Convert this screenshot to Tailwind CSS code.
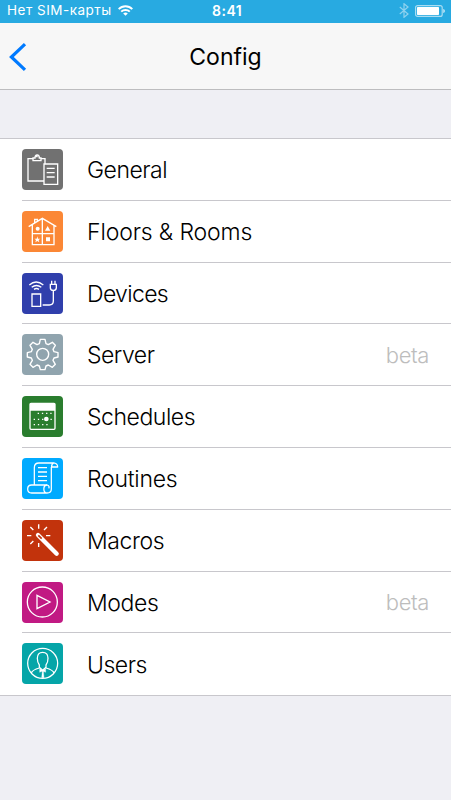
<!DOCTYPE html>
<html lang="en">
<head>
<meta charset="utf-8">
<title>Config</title>
<script src="https://cdn.jsdelivr.net/npm/@tailwindcss/browser@4"></script>
</head>
<body class="w-[451px] h-[800px] overflow-hidden bg-[#efeff4] font-['Inter','Liberation_Sans',sans-serif] text-black">
<header>
  <div class="relative h-[23px] pb-[2px] bg-[#28aae1] text-white flex items-center justify-between pl-[7px] pr-[6px]">
    <div class="flex items-center gap-[6px]">
      <span class="text-[13.5px] leading-[21px] tracking-[0.5px] whitespace-nowrap">Нет SIM-карты</span>
      <svg class="w-[15px] h-[11px]" viewBox="0 0 15 11" fill="none" stroke="#fff" stroke-width="1.9"><path d="M.7 4.1a9.6 9.6 0 0 1 13.6 0M3.2 6.7a6.1 6.1 0 0 1 8.6 0"/><path d="M7.5 10.8 5.2 8.5a3.3 3.3 0 0 1 4.6 0z" fill="#fff" stroke="none"/></svg>
    </div>
    <span class="absolute left-[212px] top-0 text-[14px] leading-[22px] font-semibold tracking-[0.5px]">8:41</span>
    <div class="flex items-center gap-[6px]">
      <svg class="w-[10px] h-[15px]" viewBox="0 0 10 15" fill="none" stroke="#8fd2ef" stroke-width="1.2"><path d="M.8 4 9 11 5 14.3V.7L9 4 .8 11"/></svg>
      <svg class="w-[30px] h-[12px]" viewBox="0 0 30 12"><rect x=".6" y=".6" width="26.6" height="10.8" rx="2" fill="none" stroke="#a9ddf3" stroke-width="1.2"/><rect x="2" y="2" width="22" height="8" rx=".7" fill="#fff"/><path d="M28.3 4c2 .6 2 3.4 0 4z" fill="#d4eef9"/></svg>
    </div>
  </div>
  <div class="relative h-[67px] bg-[#f7f7f7] border-b border-[#bdbdbf] flex items-center justify-center">
    <svg class="absolute left-[9px] top-[20px] w-[18px] h-[28px]" viewBox="0 0 18 28" fill="none" stroke="#007aff" stroke-width="3.2"><path d="M16 1.2 2.4 14 16 26.8"/></svg>
    <h1 class="text-[23px] leading-[28px] tracking-[0px] pt-[2px] font-normal">Config</h1>
  </div>
</header>
<main class="mt-[48px] border-y border-[#c8c7cc] bg-white">
  <ul>
    <li class="h-[61.8px] pl-[22px] flex"><svg class="w-[41px] h-[41px] mt-[10px] mr-[24px] rounded-[4px] bg-[#717171]" viewBox="30 25 121 123" fill="none" stroke="#fff" stroke-width="4"><path d="M94 121H47V54h16M84 54h14v15M62 60v-8h6c0-12 13-12 13 0h5v8zM71 48h5M95 70h41v61H95zM103 83h24M103 96h24M103 109h24"/></svg><div class="flex-1 flex items-center"><span class="text-[23px] font-light tracking-[-0.5px] whitespace-nowrap">General</span></div></li>
    <li class="h-[61.8px] pl-[22px] flex"><svg class="w-[41px] h-[41px] mt-[10px] mr-[24px] rounded-[4px] bg-[#fb8735]" viewBox="30 25 121 123" fill="none" stroke="#fff" stroke-width="4"><path d="M49 72 90 47l42 25M60 67v59h65V67M90 49v77M60 93h65M67 60V50h8v6"/><g fill="#fff" stroke="none"><circle cx="76" cy="78" r="6"/><path d="m106 70 8 14H98zM101 104h12v12h-12zM75 101l2 7h7l-5 4 2 7-6-4-6 4 2-7-5-4h7z"/></g></svg><div class="relative flex-1 flex items-center before:absolute before:h-px before:bg-[#c8c7cc] before:-top-px before:-left-[65px] before:right-0"><span class="text-[23px] font-light tracking-[-0.13px] whitespace-nowrap pt-px">Floors &amp; Rooms</span></div></li>
    <li class="h-[61.8px] pl-[22px] flex"><svg class="w-[41px] h-[41px] mt-[10px] mr-[24px] rounded-[4px] bg-[#303fac]" viewBox="30 25 121 123" fill="none" stroke="#fff" stroke-width="4"><path d="M59 88h26v37H59zM91 121h20q12 0 12-12V77M114 59h18v10q0 8-9 8t-9-8zM118 59V48M128 59V48M51 61q20-18 42 0M58 68q14-11 29 0M65 74q7-5 15 0"/></svg><div class="relative flex-1 flex items-center before:absolute before:h-px before:bg-[#c8c7cc] before:-top-px before:-left-[65px] before:right-0"><span class="text-[23px] font-light tracking-[-0.65px] whitespace-nowrap pt-px">Devices</span></div></li>
    <li class="h-[61.8px] pl-[22px] flex"><svg class="w-[41px] h-[41px] mt-[10px] mr-[24px] rounded-[4px] bg-[#90a4ae]" viewBox="30 25 121 123" fill="none" stroke="#fff" stroke-width="4.2" stroke-linejoin="round"><circle cx="91" cy="86" r="18"/><path d="M84 41h14l3 13 7 3 12-7 9 9-7 12 3 7 12 3v13l-12 3-3 7 7 12-9 9-12-7-7 3-3 11H84l-3-11-7-3-12 7-9-9 7-12-3-7-12-3V81l12-3 3-7-7-12 9-9 12 7 7-3z"/></svg><div class="relative flex-1 flex items-center justify-between pr-[22px] before:absolute before:h-px before:bg-[#c8c7cc] before:-top-px before:-left-[65px] before:right-0"><span class="text-[23px] font-light tracking-[-0.5px] whitespace-nowrap">Server</span><span class="text-[22px] font-light text-[#bdbdbd] tracking-[-0.4px]">beta</span></div></li>
    <li class="h-[61.8px] pl-[22px] flex"><svg class="w-[41px] h-[41px] mt-[10px] mr-[24px] rounded-[4px] bg-[#2a7d2e]" viewBox="30 25 121 123" fill="none" stroke="#fff" stroke-width="4"><rect x="53" y="47" width="75" height="78" rx="3"/><path d="M53 47h75v22H53z" fill="#fff" stroke="none"/><g stroke-dasharray="4 8.6"><path d="M76 77h43M64 95h55M64 111h43"/></g><circle cx="102" cy="94" r="7" fill="#fff" stroke="none"/></svg><div class="relative flex-1 flex items-center before:absolute before:h-px before:bg-[#c8c7cc] before:-top-px before:-left-[65px] before:right-0"><span class="text-[23px] font-light tracking-[-0.45px] whitespace-nowrap">Schedules</span></div></li>
    <li class="h-[61.8px] pl-[22px] flex"><svg class="w-[41px] h-[41px] mt-[10px] mr-[24px] rounded-[4px] bg-[#00aaff]" viewBox="30 25 121 123" fill="none" stroke="#fff" stroke-width="3.8" stroke-linejoin="round"><path d="M66 105V54q0-14 14-14h46q10 2 10 12h-18q-1-9 6-12M117 52v66q0 12-13 12H58c-16 0-16-24 0-24h46M105 106c-14 0-14 24 0 24M105 106q8 4 4 10M77 54h27M77 67h27M77 80h27M77 93h27"/></svg><div class="relative flex-1 flex items-center before:absolute before:h-px before:bg-[#c8c7cc] before:-top-px before:-left-[65px] before:right-0"><span class="text-[23px] font-light tracking-[-0.25px] whitespace-nowrap">Routines</span></div></li>
    <li class="h-[61.8px] pl-[22px] flex"><svg class="w-[41px] h-[41px] mt-[10px] mr-[24px] rounded-[4px] bg-[#c2330c]" viewBox="30 25 121 123" fill="none" stroke="#fff" stroke-width="4.2"><path d="m77 70 56 56" stroke-width="13" stroke-linecap="round"/><path d="m78 71 10 10" stroke="#c2330c" stroke-width="5"/><path d="M79 38v13M79 94v12M44 72h13M101 72h13M54 46l9 9M104 46l-9 9M54 97l9-9"/></svg><div class="relative flex-1 flex items-center before:absolute before:h-px before:bg-[#c8c7cc] before:-top-px before:-left-[65px] before:right-0"><span class="text-[23px] font-light tracking-[-0.4px] whitespace-nowrap pt-px">Macros</span></div></li>
    <li class="h-[61.8px] pl-[22px] flex"><svg class="w-[41px] h-[41px] mt-[10px] mr-[24px] rounded-[4px] bg-[#c11a83]" viewBox="30 25 121 123" fill="none" stroke="#fff" stroke-width="4"><circle cx="90" cy="85" r="45"/><path d="m74 65 39 20-39 20z"/></svg><div class="relative flex-1 flex items-center justify-between pr-[22px] before:absolute before:h-px before:bg-[#c8c7cc] before:-top-px before:-left-[65px] before:right-0"><span class="text-[23px] font-light tracking-[-0.4px] whitespace-nowrap pt-px">Modes</span><span class="text-[22px] font-light text-[#bdbdbd] tracking-[-0.4px] pt-px">beta</span></div></li>
    <li class="h-[61.8px] pl-[22px] flex"><svg class="w-[41px] h-[41px] mt-[10px] mr-[24px] rounded-[4px] bg-[#05a5a8]" viewBox="30 25 121 123" fill="none" stroke="#fff" stroke-width="3.8"><circle cx="91" cy="86" r="45"/><path d="M57 115q3-9 24-15v-9q-6-7-6-20 0-18 16-18t16 18q0 13-6 20v9q21 6 24 15M81 98l10 9 10-9"/><path d="m82 102 9 5 9-5v11l-9-4-9 4zM90 109h3l2 20h-7z" fill="#fff" stroke-width="1"/></svg><div class="relative flex-1 flex items-center before:absolute before:h-px before:bg-[#c8c7cc] before:-top-px before:-left-[65px] before:right-0"><span class="text-[23px] font-light tracking-[-0.5px] whitespace-nowrap pt-px">Users</span></div></li>
  </ul>
</main>
</body>
</html>
